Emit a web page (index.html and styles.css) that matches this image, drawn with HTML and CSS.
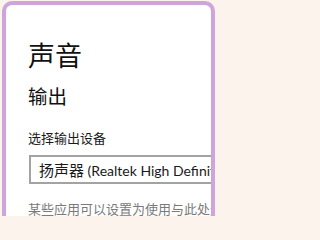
FILE: index.html
```html
<!DOCTYPE html>
<html lang="zh-CN">
<head>
<meta charset="utf-8">
<link rel="stylesheet" href="styles.css">
</head>
<body>
<div class="window">
  <div class="content">
    <h1 class="title">声音</h1>
    <h2 class="section">输出</h2>
    <div class="label">选择输出设备</div>
    <div class="select"><span class="cjk">扬声器</span> (Realtek High Definition Audio)</div>
    <div class="hint">某些应用可以设置为使用与此处选择的设备不同的设备</div>
  </div>
</div>
</body>
</html>
```
FILE: styles.css
```css
html, body {
  margin: 0;
  padding: 0;
  background: #fcf4ec;
}
body {
  width: 217px;
  height: 216px;
  overflow: hidden;
  font-family: "Noto Sans CJK SC", "Noto Sans", sans-serif;
}
.window {
  margin: 1px 2px 0 2px;
  height: 230px;
  border: 4px solid #cda5dc;
  border-bottom: none;
  border-radius: 10px 10px 0 0;
  background: #ffffff;
  overflow: hidden;
}
.content {
  padding: 32px 0 0 22px;
  width: 300px;
}
.title {
  margin: 0;
  font-size: 27px;
  font-weight: 400;
  line-height: 36px;
  color: #111;
}
.section {
  margin: 10px 0 0;
  font-size: 19.5px;
  font-weight: 400;
  line-height: 26px;
  color: #111;
}
.label {
  margin: 20px 0 0;
  font-size: 13px;
  line-height: 18px;
  color: #1a1a1a;
}
.select {
  margin: 8px 0 0 1px;
  height: 25px;
  border: 2px solid #a3a3a3;
  padding: 0 0 0 8px;
  font-family: "Lato", "Noto Sans CJK SC", sans-serif;
  font-size: 14px;
  line-height: 25px;
  color: #1a1a1a;
  white-space: nowrap;
  overflow: hidden;
}
.cjk {
  font-family: "Noto Sans CJK SC", sans-serif;
  font-size: 15px;
}
.hint {
  margin: 16px 0 0;
  font-size: 13px;
  line-height: 18px;
  color: #7a7a7a;
  white-space: nowrap;
}
```
